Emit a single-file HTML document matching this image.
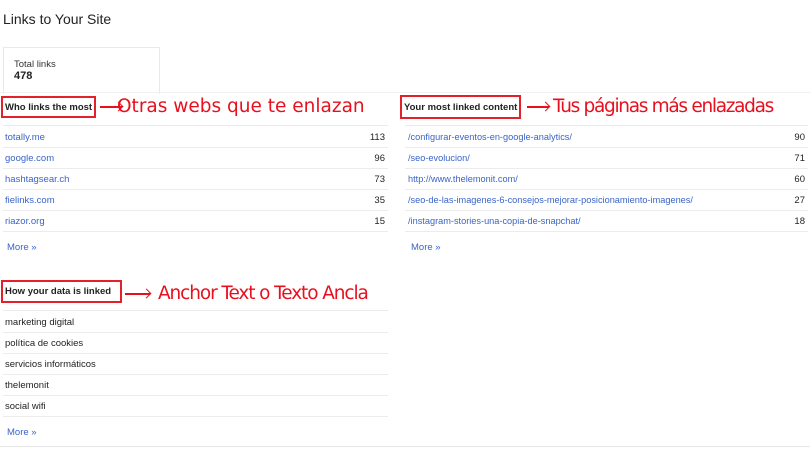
<!DOCTYPE html>
<html><head><meta charset="utf-8"><style>
body{margin:0;width:810px;height:450px;background:#fff;position:relative;overflow:hidden;font-family:"Liberation Sans",Arial,sans-serif;}
.a{position:absolute;white-space:nowrap}
.t{font-size:14px;color:#222;left:3px;top:11px}
.box{left:3px;top:47px;width:155px;height:46px;border:1px solid #e8e8e8;border-bottom:none;}
.hl{position:absolute;height:1px;background:#ebebeb}
.rb{position:absolute;border:2px solid #e4212b;box-sizing:border-box;font-size:9.5px;font-weight:bold;color:#222;padding-left:2px;display:flex;align-items:center}
.red{color:#e8101e;font-size:18.5px;font-family:"DejaVu Sans","Liberation Sans",sans-serif;letter-spacing:0}
.row{position:absolute;font-size:9.5px;height:21px;line-height:23px;border-bottom:1px solid #ececec}
.row span{position:absolute;right:3px;color:#222}
.lk{color:#3a64c8}
.r2 .lk{font-size:9.2px}
.tx{color:#222}
.more{position:absolute;font-size:9.5px;color:#3a64c8}
.arr{position:absolute;height:1.5px;background:#e8101e}
.arr:after{content:"";position:absolute;right:0;top:-3.5px;width:6px;height:6px;border-top:1.5px solid #e8101e;border-right:1.5px solid #e8101e;transform:rotate(45deg);transform-origin:center}
</style></head><body>
<div class="a t">Links to Your Site</div>
<div class="a box"><div class="a" style="left:10px;top:11px;font-size:9.5px;color:#333">Total links</div><div class="a" style="left:10px;top:22px;font-size:11px;font-weight:bold;color:#222">478</div></div>
<div class="hl" style="left:0;top:92px;width:810px;background:#f0f0f0"></div>

<div class="rb" style="left:1px;top:96px;width:95px;height:22px">Who links the most</div>
<div class="arr" style="left:100px;top:106px;width:22px"></div>
<div class="a red" style="left:117px;top:96px">Otras webs que te enlazan</div>

<div class="rb" style="left:400px;top:95px;width:121px;height:24px">Your most linked content</div>
<div class="arr" style="left:527px;top:106px;width:22px"></div>
<div class="a red" style="left:553px;top:96px;letter-spacing:-1.3px">Tus páginas más enlazadas</div>

<div class="hl" style="left:3px;top:125px;width:385px"></div>
<div class="row" style="left:3px;top:126px;width:385px"><a class="lk" style="padding-left:2px">totally.me</a><span>113</span></div>
<div class="row" style="left:3px;top:147px;width:385px"><a class="lk" style="padding-left:2px">google.com</a><span>96</span></div>
<div class="row" style="left:3px;top:168px;width:385px"><a class="lk" style="padding-left:2px">hashtagsear.ch</a><span>73</span></div>
<div class="row" style="left:3px;top:189px;width:385px"><a class="lk" style="padding-left:2px">fielinks.com</a><span>35</span></div>
<div class="row" style="left:3px;top:210px;width:385px"><a class="lk" style="padding-left:2px">riazor.org</a><span>15</span></div>
<div class="more" style="left:7px;top:242px">More »</div>

<div class="hl" style="left:405px;top:125px;width:403px"></div>
<div class="row r2" style="left:405px;top:126px;width:403px"><a class="lk" style="padding-left:3px">/configurar-eventos-en-google-analytics/</a><span>90</span></div>
<div class="row r2" style="left:405px;top:147px;width:403px"><a class="lk" style="padding-left:3px">/seo-evolucion/</a><span>71</span></div>
<div class="row r2" style="left:405px;top:168px;width:403px"><a class="lk" style="padding-left:3px">http://www.thelemonit.com/</a><span>60</span></div>
<div class="row r2" style="left:405px;top:189px;width:403px"><a class="lk" style="padding-left:3px">/seo-de-las-imagenes-6-consejos-mejorar-posicionamiento-imagenes/</a><span>27</span></div>
<div class="row r2" style="left:405px;top:210px;width:403px"><a class="lk" style="padding-left:3px">/instagram-stories-una-copia-de-snapchat/</a><span>18</span></div>
<div class="more" style="left:411px;top:242px">More »</div>

<div class="rb" style="left:1px;top:280px;width:121px;height:23px">How your data is linked</div>
<div class="arr" style="left:125px;top:293px;width:25px"></div>
<div class="a red" style="left:158px;top:283px;letter-spacing:-1.1px">Anchor Text o Texto Ancla</div>

<div class="hl" style="left:3px;top:310px;width:385px"></div>
<div class="row tx" style="left:3px;top:311px;width:385px"><span style="position:static;padding-left:2px">marketing digital</span></div>
<div class="row tx" style="left:3px;top:332px;width:385px"><span style="position:static;padding-left:2px">política de cookies</span></div>
<div class="row tx" style="left:3px;top:353px;width:385px"><span style="position:static;padding-left:2px">servicios informáticos</span></div>
<div class="row tx" style="left:3px;top:374px;width:385px"><span style="position:static;padding-left:2px">thelemonit</span></div>
<div class="row tx" style="left:3px;top:395px;width:385px"><span style="position:static;padding-left:2px">social wifi</span></div>
<div class="more" style="left:7px;top:427px">More »</div>
<div class="hl" style="left:0;top:446px;width:810px;background:#e6e6e6"></div>
</body></html>
